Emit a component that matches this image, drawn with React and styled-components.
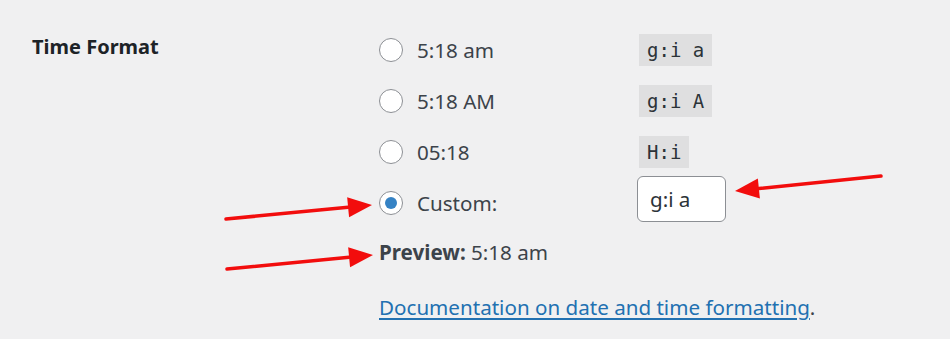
import React from 'react';
import styled, { createGlobalStyle } from 'styled-components';

const GlobalStyle = createGlobalStyle`
    html, body {
        margin: 0;
        padding: 0;
        background: #f0f0f1;
    }
    body {
        font-family: "Noto Sans", "Open Sans", sans-serif;
        color: #3c434a;
    }
`;

const Page = styled.div`
    position: relative;
    width: 950px;
    height: 339px;
    overflow: hidden;
    display: flex;
    padding: 24px 0 0 32px;
    box-sizing: border-box;
`;

const Heading = styled.div`
    width: 347px;
    flex-shrink: 0;
    font-size: 20px;
    font-weight: 700;
    line-height: 51px;
    margin-top: -3px;
    color: #1d2327;
`;

const Options = styled.div`
    display: grid;
    grid-template-columns: 258px auto;
    grid-auto-rows: 51px;
    align-items: center;
    font-size: 20.6px;
`;

const Choice = styled.label`
    display: flex;
    align-items: center;
    gap: 14px;
`;

const Radio = styled.span`
    width: 24px;
    height: 24px;
    border-radius: 50%;
    border: 1.5px solid #8c8f94;
    background: #fff;
    box-sizing: border-box;
    display: flex;
    align-items: center;
    justify-content: center;

    &::after {
        content: "";
        display: ${({ $checked }) => ($checked ? 'block' : 'none')};
        width: 12px;
        height: 12px;
        border-radius: 50%;
        background: #3582c4;
    }
`;

const Code = styled.code`
    justify-self: start;
    margin-left: 2px;
    background: rgba(0, 0, 0, 0.07);
    color: #2c3338;
    font-family: "DejaVu Sans Mono", "Liberation Mono", monospace;
    font-size: 19px;
    line-height: 32px;
    padding: 0 8px;
`;

const Input = styled.div`
    justify-self: start;
    width: 89px;
    height: 46px;
    box-sizing: border-box;
    border: 1px solid #8c8f94;
    border-radius: 6px;
    background: #fff;
    color: #2c3338;
    padding-left: 12px;
    display: flex;
    align-items: center;
    margin-top: -8px;
`;

const Preview = styled.div`
    grid-column: 1 / span 2;
    margin-top: -4px;

    strong {
        font-weight: 700;
    }
`;

const Doc = styled.div`
    grid-column: 1 / span 2;
    margin-top: 4px;

    a {
        color: #2271b1;
        text-decoration: underline;
        text-underline-offset: 3px;
        text-decoration-thickness: 1.5px;
    }
`;

const Overlay = styled.svg`
    position: absolute;
    left: 0;
    top: 0;
    pointer-events: none;
`;

const rows = [
    { label: '5:18 am', code: 'g:i a' },
    { label: '5:18 AM', code: 'g:i A' },
    { label: '05:18', code: 'H:i' },
];

const arrows = [
    { x1: 226, y1: 219, x2: 372, y2: 205 },
    { x1: 227, y1: 269, x2: 373, y2: 255 },
    { x1: 881, y1: 176, x2: 735, y2: 191 },
];

const Arrow = ({ x1, y1, x2, y2 }) => {
    const a = Math.atan2(y2 - y1, x2 - x1);
    const len = 24;
    const w = 10;
    const bx = x2 - len * Math.cos(a);
    const by = y2 - len * Math.sin(a);
    const px = -Math.sin(a) * w;
    const py = Math.cos(a) * w;
    return (
        <g>
            <line x1={x1} y1={y1} x2={bx} y2={by} stroke="#f20d0d" strokeWidth="3.5" strokeLinecap="round" />
            <polygon points={`${x2},${y2} ${bx + px},${by + py} ${bx - px},${by - py}`} fill="#f20d0d" />
        </g>
    );
};

const App = () => {
    return (
        <>
            <GlobalStyle />
            <Page>
                <Heading>Time Format</Heading>
                <Options>
                    {rows.map((r) => (
                        <React.Fragment key={r.code}>
                            <Choice>
                                <Radio />
                                {r.label}
                            </Choice>
                            <Code>{r.code}</Code>
                        </React.Fragment>
                    ))}
                    <Choice>
                        <Radio $checked />
                        Custom:
                    </Choice>
                    <Input>g:i a</Input>
                    <Preview><strong>Preview:</strong> 5:18 am</Preview>
                    <Doc><a href="#">Documentation on date and time formatting</a>.</Doc>
                </Options>
                <Overlay width="950" height="339">
                    {arrows.map((a, i) => <Arrow key={i} {...a} />)}
                </Overlay>
            </Page>
        </>
    );
};

export default App;
